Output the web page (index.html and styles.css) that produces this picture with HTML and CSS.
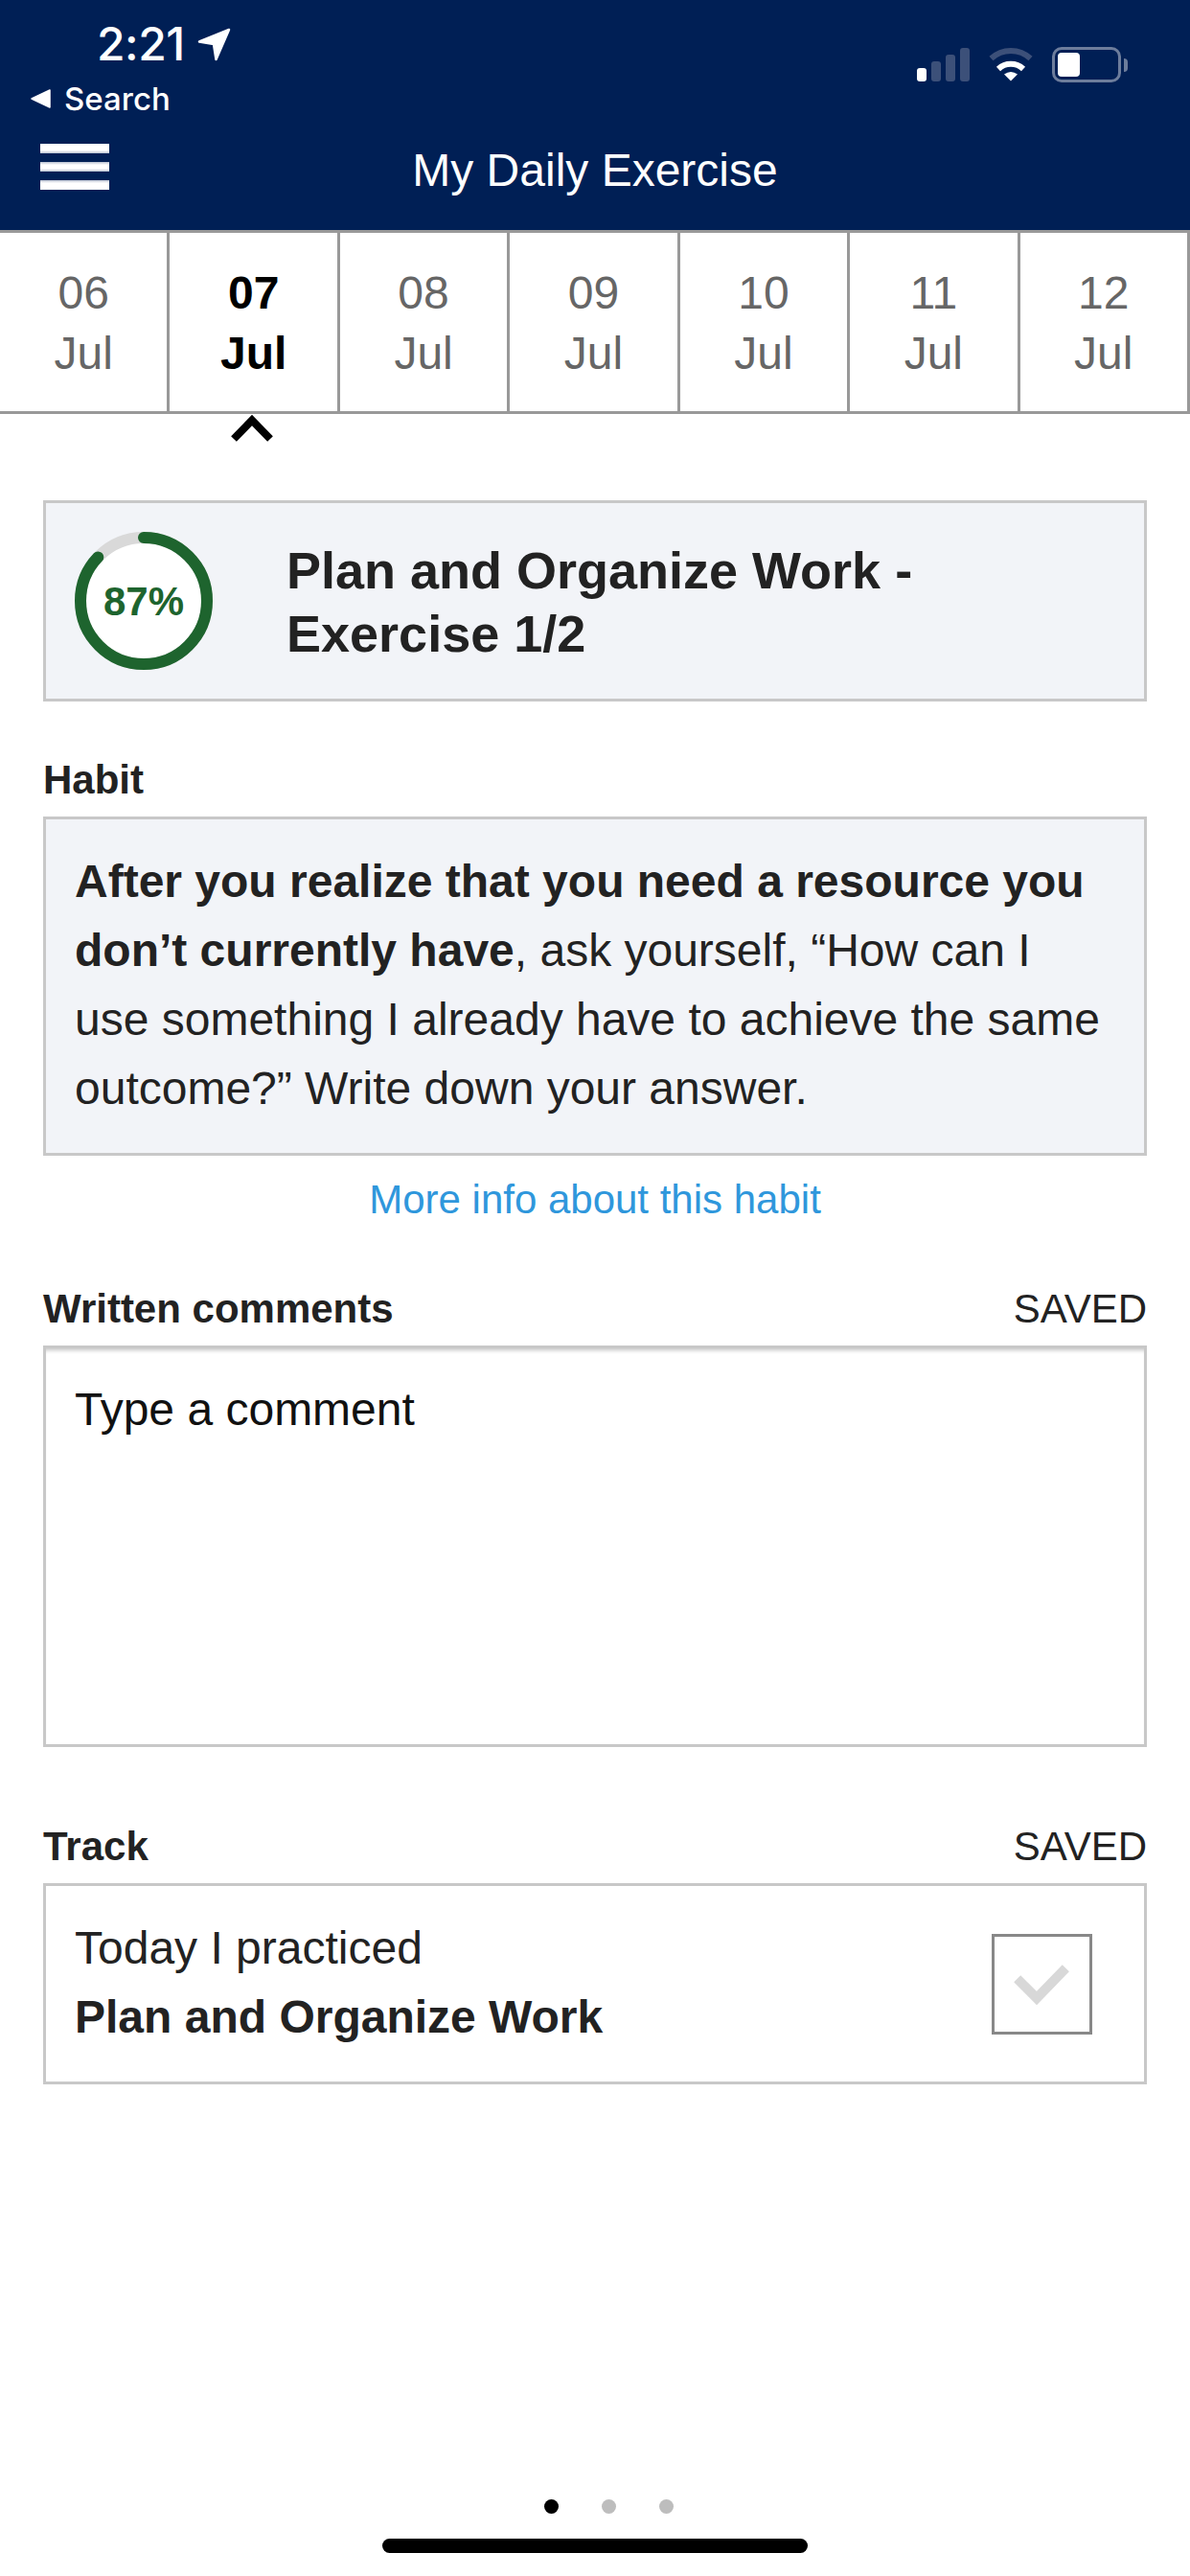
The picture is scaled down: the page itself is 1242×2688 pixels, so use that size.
FILE: index.html
```html
<!DOCTYPE html>
<html lang="en">
<head>
<meta charset="utf-8">
<title>My Daily Exercise</title>
<link rel="stylesheet" href="styles.css">
</head>
<body>
<div class="screen">
  <header class="header">
    <div class="status">
      <div class="clock">
        <span class="time">2:21</span>
        <svg class="loc" width="36" height="36" viewBox="0 0 36 36"><path d="M33 2 L2 14.500 L17 17 L19.500 33 Z" fill="#fff" stroke="#fff" stroke-width="2.500" stroke-linejoin="round"/></svg>
      </div>
      <div class="indicators">
        <div class="signal"><i class="bar b1"></i><i class="bar b2"></i><i class="bar b3"></i><i class="bar b4"></i></div>
        <svg class="wifi" width="48" height="36" viewBox="0 0 48 36">
          <path d="M3.500 12 A30 30 0 0 1 44.500 12" fill="none" stroke="#3c5079" stroke-width="6"/>
          <path d="M11 23 A19 19 0 0 1 37 23" fill="none" stroke="#fff" stroke-width="6"/>
          <path d="M24 35.500 L17 28.500 Q24 23.500 31 28.500 Z" fill="#fff"/>
        </svg>
        <div class="battery"><div class="batt-body"><div class="batt-fill"></div></div><div class="batt-cap"></div></div>
      </div>
    </div>
    <div class="back">
      <svg class="back-tri" width="21" height="20" viewBox="0 0 21 20"><path d="M20 1 L1 10 L20 19 Z" fill="#fff" stroke="#fff" stroke-width="1.500" stroke-linejoin="round"/></svg>
      <span>Search</span>
    </div>
    <nav class="nav">
      <div class="burger"><i></i><i></i><i></i></div>
      <h1 class="title">My Daily Exercise</h1>
    </nav>
  </header>

  <div class="dates">
    <div class="day"><b>06</b><b>Jul</b></div>
    <div class="day active"><b>07</b><b>Jul</b>
      <svg class="caret" width="44" height="28" viewBox="0 0 44 28"><path d="M3 25 L22 5.500 L41 25" fill="none" stroke="#000" stroke-width="8"/></svg>
    </div>
    <div class="day"><b>08</b><b>Jul</b></div>
    <div class="day"><b>09</b><b>Jul</b></div>
    <div class="day"><b>10</b><b>Jul</b></div>
    <div class="day"><b>11</b><b>Jul</b></div>
    <div class="day"><b>12</b><b>Jul</b></div>
  </div>

  <main class="content">
    <section class="card summary">
      <svg class="ring" width="144" height="144" viewBox="0 0 144 144">
        <circle cx="72" cy="72" r="66" fill="#fff" stroke="#d9d9d9" stroke-width="12"/>
        <circle cx="72" cy="72" r="66" fill="none" stroke="#1e642e" stroke-width="12" stroke-linecap="round" stroke-dasharray="360.800 414.690" transform="rotate(-90 72 72)"/>
        <text x="72" y="87" text-anchor="middle" class="ring-text">87%</text>
      </svg>
      <h2 class="summary-title">Plan and Organize Work -<br>Exercise 1/2</h2>
    </section>

    <div class="label-row first"><span class="label">Habit</span></div>
    <section class="card habit">
      <p><strong>After you realize that you need a resource you don’t currently have</strong>, ask yourself, “How can I use something I already have to achieve the same outcome?” Write down your answer.</p>
    </section>
    <a class="more">More info about this habit</a>

    <div class="label-row comments-label"><span class="label">Written comments</span><span class="saved">SAVED</span></div>
    <section class="card comment-box">Type a comment</section>

    <div class="label-row track-label"><span class="label">Track</span><span class="saved">SAVED</span></div>
    <section class="card track">
      <div class="track-text">Today I practiced<br><strong>Plan and Organize Work</strong></div>
      <div class="checkbox">
        <svg width="99" height="99" viewBox="0 0 99 99"><path d="M23.700 43.700 L44 64 L74.300 32.700" fill="none" stroke="#d8d8d8" stroke-width="10"/></svg>
      </div>
    </section>
  </main>

  <footer class="footer">
    <div class="pager"><i class="dot on"></i><i class="dot"></i><i class="dot"></i></div>
    <div class="home"></div>
  </footer>
</div>
</body>
</html>
```
FILE: styles.css
```css
* { box-sizing: border-box; }
html, body { margin: 0; padding: 0; background: #fff; }
body { width: 1242px; height: 2688px; overflow: hidden; font-family: "Liberation Sans", Arial, sans-serif; color: #222; }
.screen { width: 1242px; height: 2688px; display: flex; flex-direction: column; }

.header { height: 240px; background: #001f55; color: #fff; flex: none; }
.status { height: 83px; display: flex; justify-content: space-between; padding: 22px 65px 0 101px; }
.clock { display: flex; align-items: flex-start; }
.time { font: 500 48px/48px Inter, "Liberation Sans", sans-serif; letter-spacing: -0.5px; }
.loc { margin: 7px 0 0 13px; }
.indicators { display: flex; align-items: flex-start; margin-top: 27px; }
.signal { display: flex; align-items: flex-end; gap: 5px; height: 35px; margin-top: 1px; }
.bar { display: block; width: 10px; border-radius: 3px; background: #3c5079; }
.b1 { height: 14px; background: #fff; }
.b2 { height: 21px; }
.b3 { height: 28px; }
.b4 { height: 35px; }
.wifi { margin: 0 19px 0 19px; }
.battery { display: flex; align-items: center; height: 37px; }
.batt-body { width: 72px; height: 37px; border: 3px solid #6d7d9c; border-radius: 10px; padding: 3px; }
.batt-fill { width: 23px; height: 25px; background: #fff; border-radius: 4px; }
.batt-cap { width: 4px; height: 14px; margin-left: 3px; background: #6d7d9c; border-radius: 0 4px 4px 0; }

.back { height: 40px; display: flex; align-items: center; padding-left: 32px; font: 500 33px/40px Inter, "Liberation Sans", sans-serif; }
.back-tri { margin-right: 14px; }
.nav { display: grid; grid-template-columns: 1fr auto 1fr; padding: 25px 42px 0; }
.burger { width: 72px; height: 48px; margin-top: 2px; display: flex; flex-direction: column; justify-content: space-between; }
.burger i { display: block; height: 10px; background: linear-gradient(#fff 70%, #b8c0d0); }
.burger i:nth-child(2) { background: linear-gradient(#b8c0d0, #fff 30%, #fff 70%, #b8c0d0); }
.burger i:nth-child(3) { background: linear-gradient(#b8c0d0, #fff 30%); }
.title { margin: 0; font-size: 48px; line-height: 60px; font-weight: 400; }

.dates { flex: none; height: 192px; display: grid; grid-template-columns: repeat(7, 1fr); border-top: 3px solid #999; border-bottom: 3px solid #999; }
.day { position: relative; border-right: 3px solid #999; padding-top: 31px; text-align: center; color: #666; }
.day b { display: block; font-weight: 400; font-size: 48px; line-height: 63px; }
.day.active { color: #000; }
.day.active b { font-weight: 700; }
.caret { position: absolute; left: 64px; top: 190px; }

.content { padding: 90px 45px 0; }
.card { border: 3px solid #c8c8c8; background: #fff; }
.summary { height: 210px; background: #f2f4f8; display: flex; align-items: center; padding-left: 30px; }
.ring { flex: none; margin-right: 77px; }
.ring-text { font-size: 42px; font-weight: 700; fill: #1e642e; }
.summary-title { margin: 2px 0 0; font-size: 54px; line-height: 66px; font-weight: 700; color: #222; }

.label-row { display: flex; justify-content: space-between; height: 50px; font-size: 42px; line-height: 50px; }
.label { font-weight: 700; }
.first { margin-top: 57px; margin-bottom: 13px; }
.habit { height: 354px; background: #f2f4f8; padding: 29px 40px 0 30px; }
.habit p { margin: 0; font-size: 48px; line-height: 72px; }
.more { display: block; margin-top: 21px; text-align: center; font-size: 42px; line-height: 50px; color: #2f97dc; }
.comments-label { margin-top: 64px; margin-bottom: 13px; }
.comment-box { height: 419px; padding: 28px 30px 0; font-size: 48px; line-height: 72px; color: #111; box-shadow: inset 0 5px 4px -3px #c4c4c4; }
.track-label { margin-top: 79px; margin-bottom: 13px; }
.track { height: 210px; display: flex; justify-content: space-between; align-items: center; padding: 0 54px 0 30px; }
.track-text { font-size: 48px; line-height: 72px; margin-top: -3px; }
.checkbox { width: 105px; height: 105px; border: 3px solid #888; }
.checkbox svg { display: block; }

.footer { margin-top: auto; padding-bottom: 24px; }
.pager { display: flex; justify-content: center; gap: 45px; padding-left: 29px; margin-bottom: 26px; }
.dot { display: block; width: 15px; height: 15px; border-radius: 50%; background: #bdbdbd; }
.dot.on { background: #000; }
.home { width: 444px; height: 15px; margin: 0 auto; background: #000; border-radius: 8px; }
```
